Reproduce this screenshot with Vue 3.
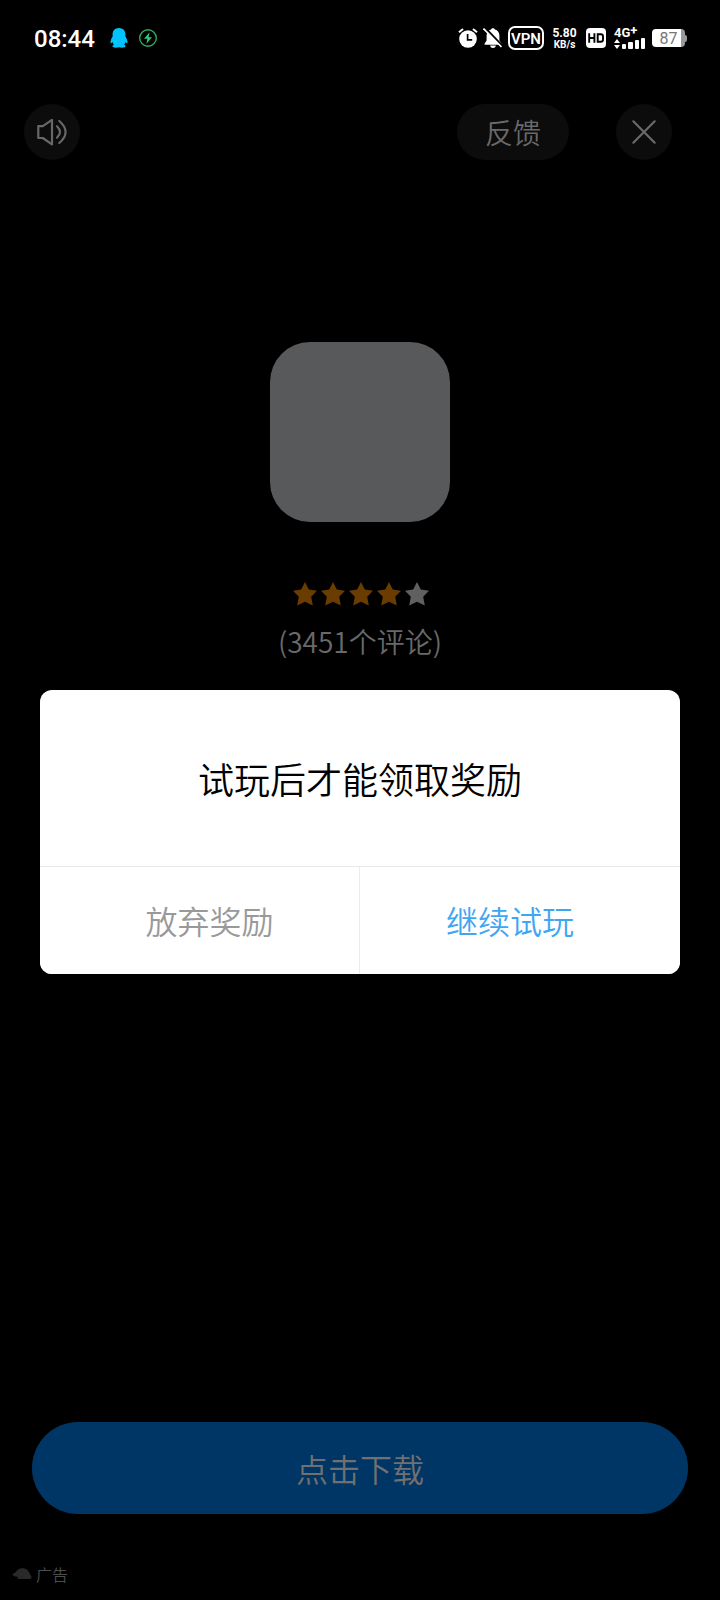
<script setup>
const stars = [true, true, true, true, false]
const bars = [5, 7, 8.5, 10.5]
</script>

<template>
  <div class="screen">
    <header class="status">
      <span class="time">08:44</span>
      <svg class="qq" width="18" height="20" viewBox="0 0 18 20">
        <path d="M9 0C5 0 2.600 2.800 2.600 6.200v2.200C1.200 10.500.4 12.700.5 14.500c.1 1 .9.8 1.900-.6.3 1 .8 1.900 1.500 2.600-1 .5-1.600 1.200-1.400 2 .2 1 3 1.500 6.500.8 3.500.7 6.300.2 6.500-.8.2-.8-.4-1.500-1.400-2 .7-.7 1.200-1.600 1.500-2.600 1 1.400 1.800 1.600 1.900.6.1-1.800-.7-4-2.100-6.100V6.200C15.400 2.800 13 0 9 0z" fill="#00c3fb" />
      </svg>
      <svg class="charge" width="20" height="20" viewBox="0 0 20 20">
        <circle cx="10" cy="10" r="8.300" fill="none" stroke="#2fa866" stroke-width="1.400" />
        <path d="M11.600 4.300 6 10.800h3.400L8.400 15.700 14 9.200h-3.400z" fill="#31c878" />
      </svg>
      <svg class="alarm" width="20" height="22" viewBox="0 0 20 22">
        <circle cx="10" cy="12" r="8.800" fill="#fff" />
        <path d="M1 5.200 5 1.900M19 5.200 15 1.900" stroke="#fff" stroke-width="2" />
        <path d="M9.600 7v5.800h4.600" fill="none" stroke="#000" stroke-width="1.700" />
      </svg>
      <svg class="bell" width="20" height="22" viewBox="0 0 20 22">
        <path d="M10 1.200c-1.200 0-1.800.7-1.900 1.300C5.200 3.200 3.600 5.600 3.600 8.400v5.200L1.600 16.500v1.300h16.800v-1.300L16.400 13.600V8.400c0-2.800-1.600-5.200-4.500-5.900-.1-.6-.7-1.300-1.900-1.300zM7.200 18.600a2.800 2.400 0 0 0 5.600 0z" fill="#fff" />
        <path d="M2 .8 19.500 19" stroke="#000" stroke-width="2.200" />
        <path d="M.5 1.600 18.500 20" stroke="#fff" stroke-width="1.700" />
      </svg>
      <span class="vpn">VPN</span>
      <span class="speed"><b>5.80</b><i>KB/s</i></span>
      <span class="hd">
        <svg width="20" height="20" viewBox="0 0 20 20">
          <rect width="20" height="20" rx="4" fill="#fff" />
          <path d="M3.200 5.200v9.600M8.400 5.200v9.600M3.200 10h5.200M11.700 6.200h3.100q2.200 0 2.200 2v3.600q0 2-2.200 2h-3.100z" fill="none" stroke="#000" stroke-width="1.900" />
        </svg>
      </span>
      <span class="net">
        <span class="gen">4G<sup>+</sup></span>
        <span class="signal">
          <svg width="6" height="10" viewBox="0 0 6 10"><path d="M3 0 6 4H0zM3 10 0 6h6z" fill="#fff" /></svg>
          <span v-for="h in bars" :key="h" class="bar" :style="{ height: h + 'px' }" />
        </span>
      </span>
      <span class="battery"><span>87</span></span>
    </header>

    <nav class="controls">
      <button class="round">
        <svg width="56" height="56" viewBox="0 0 56 56" fill="none" stroke="#686868" stroke-width="2.200" stroke-linejoin="round" stroke-linecap="round">
          <path d="M14.300 22.200h4.500L28 15.800v24.600L18.800 34H14.300z" />
          <path d="M33 22.300q6 5.700 0 11.400M35.300 17q12.600 11 0 22" />
        </svg>
      </button>
      <button class="feedback">反馈</button>
      <button class="round">
        <svg width="56" height="56" viewBox="0 0 56 56" fill="none" stroke="#696969" stroke-width="2.200" stroke-linecap="round">
          <path d="M17.300 17.300 38.700 38.700M38.700 17.300 17.300 38.700" />
        </svg>
      </button>
    </nav>

    <main class="app-info">
      <div class="app-icon" />
      <div class="stars">
        <svg v-for="(on, i) in stars" :key="i" width="24" height="24" viewBox="0 0 24 24">
          <path :fill="on ? '#6b3c00' : '#606060'" d="M12 0l3.800 7.500 8.200 1.200-5.800 6.100 1.600 8.700L12 19.700l-7.800 3.800L5.800 14.800 0 8.700l8.200-1.200z" />
        </svg>
      </div>
      <p class="reviews">(3451个评论)</p>
    </main>

    <button class="download">点击下载</button>
    <footer class="ad">
      <svg width="20" height="12" viewBox="0 0 20 12"><path d="M0 6.500C2.500 5.500 4 3.500 6 1.500 9-.5 13-.2 15.500 2c2 2 2.700 5 4.300 7.300-.8 1.500-2 1.700-4 1.700H6.500q-1.500-.5-1-2.500C3.500 9 1.500 8 0 6.500z" fill="#292929" /></svg>
      <span>广告</span>
    </footer>

    <section class="dialog">
      <h1>试玩后才能领取奖励</h1>
      <div class="actions">
        <button class="quit">放弃奖励</button>
        <button class="stay">继续试玩</button>
      </div>
    </section>
  </div>
</template>

<style>
body { background: #000; }
</style>

<style scoped>
* { box-sizing: border-box; }
svg { display: block; flex: none; }
button { border: 0; padding: 0; font: inherit; display: flex; align-items: center; justify-content: center; }
.screen {
  position: relative; width: 720px; height: 1600px; overflow: hidden; background: #000;
  display: flex; flex-direction: column;
  font-family: "Noto Sans CJK SC", sans-serif; font-weight: 350;
}
.status { height: 76px; flex: none; display: flex; align-items: center; padding-left: 34px; color: #fff; font-family: Roboto, sans-serif; }
.time { width: 60px; font-size: 24px; line-height: 28px; font-weight: 500; margin-top: 1px; white-space: nowrap; }
.qq { margin-left: 16px; }
.charge { margin-left: 10px; }
.alarm { margin-left: 300px; }
.bell { margin-left: 5px; }
.vpn {
  width: 36px; height: 24px; margin-left: 5px; border: 2px solid #fff; border-radius: 7px;
  display: flex; align-items: center; justify-content: center; font-size: 15px; font-weight: 600; padding-top: 1px;
}
.speed { width: 25px; margin-left: 8px; padding-top: 1px; display: flex; flex-direction: column; align-items: center; white-space: nowrap; }
.speed b { font-size: 12px; line-height: 11px; font-weight: 700; }
.speed i { font-size: 10px; line-height: 11px; font-style: normal; font-weight: 700; }
.hd { margin-left: 9px; }
.net { width: 32px; height: 21px; margin-left: 8px; display: flex; flex-direction: column; justify-content: space-between; }
.gen { font-size: 13px; line-height: 9px; height: 10px; font-weight: 700; white-space: nowrap; }
.gen sup { font-size: 13px; line-height: 0; vertical-align: 2px; }
.signal { height: 10px; display: flex; align-items: flex-end; gap: 2.200px; }
.bar { width: 4.100px; background: #fff; border-radius: 1px; }
.battery {
  width: 33px; height: 18px; margin-left: 6px; position: relative; border-radius: 4px;
  background: linear-gradient(90deg, #fff 29px, #999 29px);
  color: #777; font-size: 16px; line-height: 20px; font-weight: 400; text-align: center;
}
.battery::after { content: ""; position: absolute; left: 33px; top: 6px; width: 2px; height: 7px; border-radius: 0 2px 2px 0; background: #999; }

.controls { flex: none; display: flex; align-items: center; height: 56px; margin: 28px 48px 0 24px; }
.round { width: 56px; height: 56px; border-radius: 50%; background: #0c0c0c; }
.feedback { width: 112px; height: 56px; margin-left: auto; margin-right: 47px; border-radius: 28px; background: #0c0c0c; color: #696969; font-size: 28px; }

.app-info { margin-top: 182px; display: flex; flex-direction: column; align-items: center; }
.app-icon { width: 180px; height: 180px; border-radius: 40px; background: #58595b; }
.stars { display: flex; gap: 4px; margin-top: 60px; padding-left: 2px; }
.reviews { margin: 15px 0 0; font-size: 28px; line-height: 40px; color: #696969; }

.download { flex: none; width: 656px; height: 92px; margin: auto 32px 0; border-radius: 46px; background: #003665; color: #707070; font-size: 32px; }
.ad { flex: none; height: 86px; padding: 46px 0 12px 12px; display: flex; align-items: center; gap: 4px; color: #4d4d4d; font-size: 16px; line-height: 24px; }

.dialog { position: absolute; left: 40px; top: 690px; width: 640px; height: 284px; border-radius: 12px; background: #fff; overflow: hidden; display: flex; flex-direction: column; }
.dialog h1 { margin: 0; height: 176px; padding-bottom: 1px; display: flex; align-items: center; justify-content: center; font-size: 36px; font-weight: 350; color: #000; }
.actions { flex: 1; display: flex; border-top: 1px solid #e8e8e8; }
.actions button { background: #fff; font-size: 32px; padding-bottom: 2px; }
.actions .quit { width: 320px; padding-left: 20px; border-right: 1px solid #ececec; color: #999; }
.actions .stay { width: 320px; padding-right: 20px; color: #3ea6f2; }
</style>
